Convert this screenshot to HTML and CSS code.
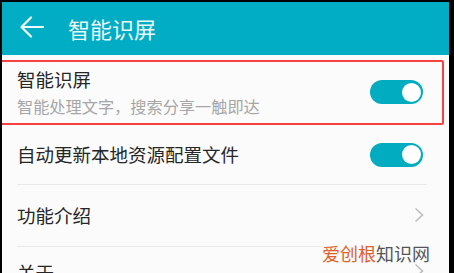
FILE: index.html
```html
<!DOCTYPE html>
<html lang="zh">
<head>
<meta charset="utf-8">
<link rel="stylesheet" href="styles.css">
</head>
<body>
<div class="screen">
  <header class="bar">
    <svg class="back" width="24" height="22" viewBox="0 0 24 22"><path d="M11 1.5 L1.5 11 L11 20.5 M1.5 11 H23" fill="none" stroke="#eefafc" stroke-width="2.2" stroke-linecap="round" stroke-linejoin="round"/></svg>
    <span class="title">智能识屏</span>
  </header>
  <div class="list">
    <div class="row row1">
      <div class="texts">
        <div class="label">智能识屏</div>
        <div class="sub">智能处理文字，搜索分享一触即达</div>
      </div>
      <span class="toggle"><span class="knob"></span></span>
      <div class="highlight"></div>
    </div>
    <div class="row row2">
      <div class="label">自动更新本地资源配置文件</div>
      <span class="toggle"><span class="knob"></span></span>
    </div>
    <div class="sep"></div>
    <div class="row row3">
      <div class="label">功能介绍</div>
      <svg class="chev" width="10" height="16" viewBox="0 0 10 16"><path d="M1.5 1.5 L8.5 8 L1.5 14.5" fill="none" stroke="#bdbdbd" stroke-width="1.6"/></svg>
    </div>
    <div class="sep"></div>
    <div class="row row4">
      <div class="label">关于</div>
      <svg class="chev" width="10" height="16" viewBox="0 0 10 16"><path d="M1.5 1.5 L8.5 8 L1.5 14.5" fill="none" stroke="#bdbdbd" stroke-width="1.6"/></svg>
    </div>
    <div class="watermark"><span class="wm-a">爱创根</span><span class="wm-b">知识网</span></div>
  </div>
</div>
</body>
</html>
```
FILE: styles.css
```css
* { box-sizing: border-box; }
html, body { margin: 0; padding: 0; }
body {
  background: #000;
  width: 454px;
  height: 273px;
  overflow: hidden;
  font-family: "Noto Sans CJK SC", "Noto Sans", sans-serif;
}
.screen {
  margin: 2px 0 0 2px;
  width: 447px;
  height: 271px;
  background: #fbfbfb;
  overflow: hidden;
  position: relative;
}
.bar {
  height: 53px;
  background: #01adc4;
  display: flex;
  align-items: center;
  padding-left: 18px;
}
.back { display: block; margin-top: -4px; }
.title {
  color: #e9f8fa;
  font-size: 22px;
  line-height: 1;
  margin-left: 24px;
  margin-top: -2px;
}
.list { position: relative; }
.row {
  display: flex;
  align-items: center;
  justify-content: space-between;
  padding: 0 26px 0 15px;
  position: relative;
}
.row1 { height: 70px; padding-top: 4px; }
.row2 { height: 59px; }
.row3 { height: 61px; }
.row4 { height: 40px; align-items: flex-start; padding-top: 16px; padding-right: 25px; }
.label {
  font-size: 18.5px;
  line-height: 1;
  color: #262626;
}
.sub {
  font-size: 16.2px;
  line-height: 1;
  color: #a6a6a6;
  margin-top: 9px;
}
.sep {
  height: 1px;
  background: #e9e9e9;
  margin: 0 22px 0 15px;
}
.toggle {
  width: 53px;
  height: 24px;
  border-radius: 12px;
  background: #01abc0;
  display: flex;
  align-items: center;
  justify-content: flex-end;
  padding-right: 2px;
}
.knob {
  width: 19px;
  height: 19px;
  border-radius: 50%;
  background: #fff;
}
.row3 .chev { margin-right: -1px; margin-top: -1px; }
.highlight {
  position: absolute;
  left: -6px;
  top: 5px;
  width: 448px;
  height: 65px;
  border: 2px solid #f6433f;
  border-radius: 2px;
}
.watermark {
  position: absolute;
  left: 319px;
  top: 188px;
  font-size: 18px;
  line-height: 20px;
  background: #fbfbfb;
  padding: 0 1px;
}
.wm-a { color: #e0622a; }
.wm-b { color: #555; }
```
